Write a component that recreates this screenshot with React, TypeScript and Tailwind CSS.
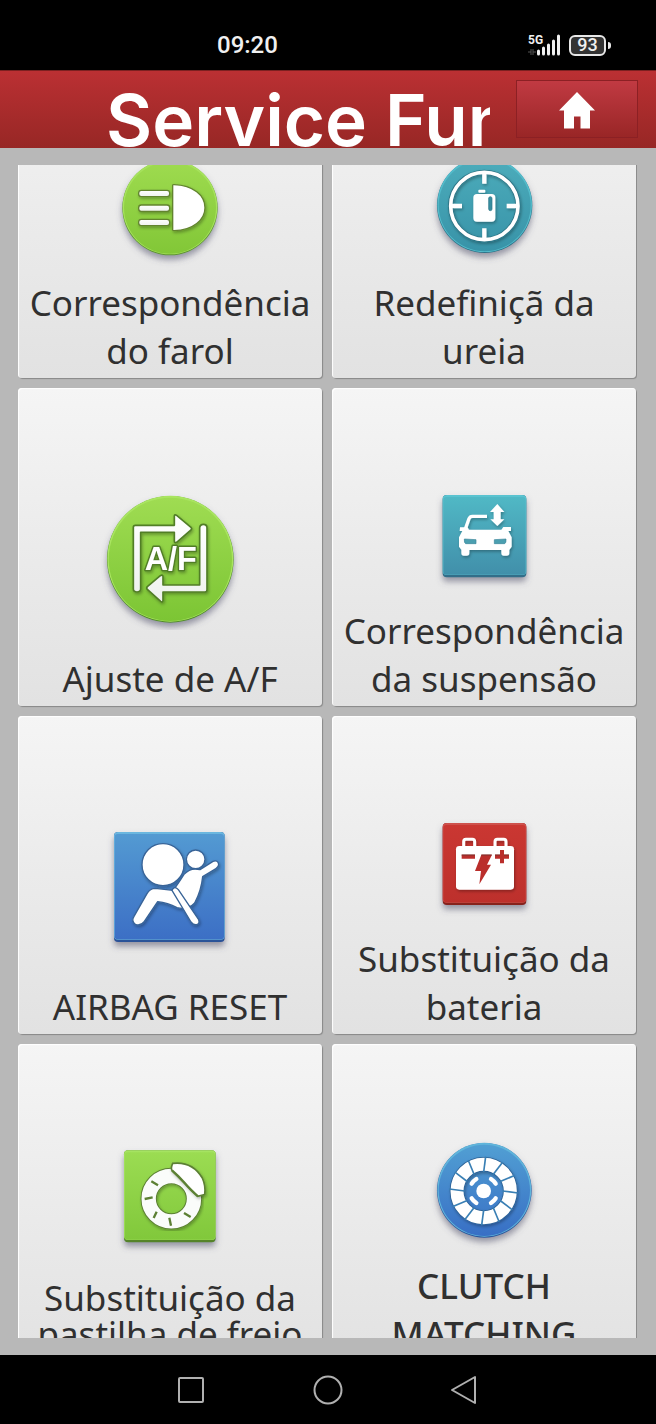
import { useLayoutEffect, useRef, type ReactNode } from "react";

const FIRST_SCROLL = 105;

function Shade({ id, from, to }: { id: string; from: string; to: string }) {
  return (
    <linearGradient id={id} x1="0" y1="0" x2="0" y2="1">
      <stop offset="0" stopColor={from} />
      <stop offset="1" stopColor={to} />
    </linearGradient>
  );
}

function Art({ box, id, from, to, children }: { box: string; id: string; from: string; to: string; children: ReactNode }) {
  return (
    <svg viewBox={box} className="size-[140px]" aria-hidden="true">
      <defs>
        <Shade id={id} from={from} to={to} />
        <Shade id={id + "-white"} from="#ffffff" to="#eef2ee" />
        <filter id={id + "-drop"} x="-20%" y="-20%" width="140%" height="150%">
          <feDropShadow dx="0" dy="13" stdDeviation="10" floodColor="#50506a" floodOpacity="0.55" />
        </filter>
        <filter id={id + "-soft"} x="-20%" y="-20%" width="140%" height="140%">
          <feDropShadow dx="3" dy="5" stdDeviation="4" floodColor="#000000" floodOpacity="0.3" />
        </filter>
      </defs>
      {children}
    </svg>
  );
}

function Disc({ id, cx, cy, r, top, rim }: { id: string; cx: number; cy: number; r: number; top: string; rim: string }) {
  return (
    <g>
      <circle cx={cx} cy={cy} r={r} fill={rim} filter={`url(#${id}-drop)`} />
      <circle cx={cx} cy={cy - 2} r={r - 1} fill={top} />
      <circle cx={cx} cy={cy} r={r - 5} fill={`url(#${id})`} />
    </g>
  );
}

function Plate({ id, x, y, w, h, top, rim }: { id: string; x: number; y: number; w: number; h: number; top: string; rim: string }) {
  return (
    <g>
      <rect x={x} y={y} width={w} height={h} rx="12" fill={rim} filter={`url(#${id}-drop)`} />
      <rect x={x} y={y} width={w} height={h - 7} rx="12" fill={top} />
      <rect x={x + 2} y={y + 6} width={w - 4} height={h - 14} rx="9" fill={`url(#${id})`} />
    </g>
  );
}

function HeadlampArt() {
  return (
    <Art box="0 -38 420 420" id="lamp" from="#9edb4f" to="#82c737">
      <Disc id="lamp" cx={210} cy={171} r={143} top="#a6e25c" rim="#5f9430" />
      <g fill="url(#lamp-white)" stroke="#62842f" strokeWidth="4" filter="url(#lamp-soft)">
        <rect x="116" y="119" width="93" height="19" rx="8" />
        <rect x="116" y="163" width="93" height="19" rx="8" />
        <rect x="116" y="206" width="93" height="19" rx="8" />
        <path d="M218 104 Q218 102 222 102 C280 104 315 134 315 171 C315 207 280 238 222 240 Q218 240 218 237 Z" fill="#fff" />
      </g>
    </Art>
  );
}

function UreaArt() {
  return (
    <Art box="-18 -38 420 420" id="urea" from="#4cacbb" to="#3893a8">
      <Disc id="urea" cx={194} cy={164} r={143} top="#53bccb" rim="#2b748a" />
      <g filter="url(#urea-soft)">
        <circle cx="193" cy="166" r="101" fill="none" stroke="#2c7485" strokeWidth="16" />
        <circle cx="193" cy="166" r="101" fill="none" stroke="#fff" strokeWidth="11" />
        <path d="M193 66v33M193 233v33M92 166h34M260 166h34" stroke="#fff" strokeWidth="13" />
        <rect x="175" y="117" width="21" height="9" rx="3" fill="#fff" />
        <rect x="160" y="130" width="66" height="83" rx="11" fill="#fff" />
        <rect x="206" y="138" width="10" height="42" rx="5" fill="#398ea0" stroke="#2c7485" strokeWidth="2" />
      </g>
    </Art>
  );
}

function AirFuelArt() {
  return (
    <Art box="30 28 420 420" id="air" from="#9fdc52" to="#7cc534">
      <Disc id="air" cx={241} cy={236} r={190} top="#a9e560" rim="#528b28" />
      <g fill="url(#air-white)" stroke="#517e27" strokeWidth="5" strokeLinejoin="round" filter="url(#air-soft)">
        <path d="M130 325 V140 Q130 134 136 134 H253 V106 Q254 100 260 104 L303 140 Q307 144 303 148 L260 185 Q253 188 253 181 V155 H152 V325 Q152 334 141 334 Q130 334 130 325 Z" />
        <path d="M351 141 V327 Q351 334 344 334 H219 V359 Q218 367 212 362 L172 326 Q168 322 172 318 L211 285 Q219 281 219 288 V313 H329 V141 Q330 131 340 131 Q351 131 351 141 Z" />
      </g>
      <g filter="url(#air-soft)">
        <text x="242" y="267" textAnchor="middle" fontFamily="'Liberation Sans', sans-serif" fontWeight="700" fontSize="97" fill="#fff" stroke="#517e27" strokeWidth="9" strokeLinejoin="round" paintOrder="stroke">A/F</text>
      </g>
    </Art>
  );
}

function SuspensionArt() {
  return (
    <Art box="-33 -43 420 420" id="susp" from="#50b8c5" to="#418faa">
      <Plate id="susp" x={53} y={44} w={251} h={247} top="#5ac3d0" rim="#306e89" />
      <g filter="url(#susp-soft)" fill="#fff">
        <path d="M186 108 H142 Q135 108 132 115 L121 146" fill="none" stroke="#fff" strokeWidth="10" />
        <path d="M105 141 H128 L132 148 H229 L235 140 H258 V152 H250 L260 171 V199 L253 209 V219 Q253 226 245 226 H236 Q229 226 229 218 V209 H133 V218 Q133 226 125 226 H116 Q109 226 109 218 V208 L102 199 V171 L112 152 H104 Z" />
        <path d="M217 71 L238 95 H227 V117 H238 L217 137 L196 117 H206 V95 H195 Z" />
      </g>
      <path d="M118 176 L153 178 V190 H122 Q117 188 118 176 Z M243 176 L208 178 V190 H239 Q244 188 243 176 Z" fill="#4b9fb0" stroke="#39859a" strokeWidth="2" />
    </Art>
  );
}

function AirbagArt() {
  return (
    <Art box="15 8 420 420" id="bag" from="#539ad2" to="#3c6fc5">
      <Plate id="bag" x={57} y={50} w={332} h={330} top="#6ab6df" rim="#2c5298" />
      <g filter="url(#bag-soft)" fill="#fff" stroke="#386397" strokeWidth="4" strokeLinejoin="round">
        <path d="M315 163 L354 138 Q369 133 371 147 Q371 155 363 160 L323 184 Q319 226 299 263 Q279 285 246 277 Q218 262 188 259 L148 318 Q137 333 121 327 Q108 317 117 303 L156 235 Q165 219 181 219 L234 225 Q249 206 267 177 Q287 155 315 163 Z" />
        <path d="M231 225 Q238 210 250 223 L311 313 Q315 325 305 328 Q296 330 288 320 Z" />
        <circle cx="204" cy="148" r="63" />
        <circle cx="302" cy="132" r="28" />
      </g>
    </Art>
  );
}

function BatteryArt() {
  return (
    <Art box="-33 -35 420 420" id="batt" from="#ca3732" to="#bd302c">
      <Plate id="batt" x={53} y={52} w={251} h={246} top="#ce514c" rim="#87211f" />
      <g filter="url(#batt-soft)">
        <path d="M116 122 V108 Q116 101 123 101 H142 Q149 101 149 108 V122 M210 122 V108 Q210 101 217 101 H236 Q243 101 243 108 V122" fill="none" stroke="#fff" strokeWidth="9" />
        <rect x="93" y="121" width="174" height="131" rx="10" fill="#fff" />
      </g>
      <path d="M110 147h40v12h-40z M210 147h15v-14h12v14h15v12h-15v14h-12v-14h-15z M169 147 H201 L186 177 H198 L163 236 L168 196 H150 Z" fill="#ba2e2b" />
      <path d="M110 148h40M210 148h15M237 148h15M169 148h31" stroke="#78302d" strokeWidth="3" />
    </Art>
  );
}

function BrakeArt() {
  return (
    <Art box="-17 -18 420 420" id="brake" from="#9bdc52" to="#81c83b">
      <Plate id="brake" x={55} y={43} w={275} h={276} top="#a5e361" rim="#548329" />
      <g filter="url(#brake-soft)">
        <circle cx="197" cy="188" r="68" fill="none" stroke="#5c8034" strokeWidth="49" />
        <circle cx="197" cy="188" r="68" fill="none" stroke="#fafcfa" strokeWidth="43" />
      </g>
      <path d="M137 136l20 12M117 189l24-5M144 246l9-19M196 269l-5-24M255 243l-20-12" stroke="#5c8034" strokeWidth="7" />
      <path d="M201 82 Q260 75 290 126 Q301 151 297 176 L276 181 L200 105 Q194 98 201 82 Z" fill="#fff" stroke="#5c8034" strokeWidth="5" filter="url(#brake-soft)" />
      <path d="M199 103 Q218 119 235 139 Q258 166 277 181" fill="none" stroke="#5c8034" strokeWidth="7" />
    </Art>
  );
}

const spokes = Array.from({ length: 12 }, (_, i) => i * 30);

function ClutchArt() {
  return (
    <Art box="0 -12 420 420" id="clutch" from="#519fd3" to="#386fc5">
      <Disc id="clutch" cx={211} cy={196} r={142} top="#60b5db" rim="#2c589e" />
      <circle cx="209" cy="198" r="80" fill="none" stroke="#2c6195" strokeWidth="44" filter="url(#clutch-soft)" />
      <circle cx="209" cy="198" r="80" fill="none" stroke="#fff" strokeWidth="39" />
      <g stroke="#397fb4" strokeWidth="5">
        {spokes.map((angle) => (
          <path key={angle} d="M209 141 L215 95" transform={`rotate(${angle} 209 198)`} />
        ))}
      </g>
      <circle cx="209" cy="198" r="22" fill="#fff" />
      <g stroke="#fff" strokeWidth="13" strokeLinecap="round">
        <path d="M173 176 Q178 168 187 162 M231 162 Q240 168 245 176 M245 220 Q240 228 231 234 M187 234 Q178 228 173 220" fill="none" />
      </g>
    </Art>
  );
}

type Tile = { label: string; art: ReactNode; text: string };

const regular = "pb-[3px] leading-[48px]";
const tiles: Tile[] = [
  { label: "Correspondência do farol", art: <HeadlampArt />, text: regular },
  { label: "Redefiniçã da ureia", art: <UreaArt />, text: regular },
  { label: "Ajuste de A/F", art: <AirFuelArt />, text: regular },
  { label: "Correspondência da suspensão", art: <SuspensionArt />, text: regular },
  { label: "AIRBAG RESET", art: <AirbagArt />, text: regular },
  { label: "Substituição da bateria", art: <BatteryArt />, text: regular },
  { label: "Substituição da pastilha de freio", art: <BrakeArt />, text: "pb-[10px] leading-[36px]" },
  { label: "CLUTCH MATCHING", art: <ClutchArt />, text: "pb-[4px] leading-[48px] font-medium" },
];

function StatusBar() {
  return (
    <div className="flex h-[70px] shrink-0 items-center justify-between bg-black pt-5 pr-[45px] pl-[217px] font-['Roboto',sans-serif] text-[#f0f0f0]">
      <time className="text-[24px] leading-8 font-medium">09:20</time>
      <div className="flex items-center gap-2">
        <svg viewBox="0 0 34 22" className="h-[22px] w-[34px]" role="img" aria-label="5G">
          <text x="1" y="10" fontSize="12" fontWeight="700" fill="#f0f0f0">5G</text>
          <path d="M1 18h3M4 15v6M6 15v6M6 18h3" stroke="#555" strokeWidth="1" />
          <path d="M11.500 17v3M16.500 14v6M21.500 11v9M26.500 7v13M31.500 2v18" stroke="#f0f0f0" strokeWidth="3" strokeLinecap="round" />
        </svg>
        <div className="flex items-center gap-0.5">
          <span className="flex h-[21px] w-[37px] items-center justify-center rounded-md border-2 border-[#e8e8e8] bg-[#333333] text-[18px] leading-none font-medium">93</span>
          <span className="h-[7px] w-[3px] rounded-r-sm bg-[#e8e8e8]" />
        </div>
      </div>
    </div>
  );
}

export default function App() {
  const list = useRef<HTMLElement>(null);

  useLayoutEffect(() => {
    if (list.current) list.current.scrollTop = FIRST_SCROLL;
  }, []);

  return (
    <div className="flex h-screen flex-col bg-[#b8b8b8] font-['Noto_Sans',sans-serif]">
      <StatusBar />
      <header className="flex h-[78px] shrink-0 items-start gap-[26px] border-t border-[#7c2020] bg-linear-to-b from-[#bb3033] to-[#972725] pr-[18px] pl-[106px]">
        <h1 className="h-full min-w-0 flex-1 overflow-hidden font-['Inter',sans-serif] text-[71px] leading-[98px] font-semibold whitespace-nowrap text-white">
          Service Function
        </h1>
        <button type="button" aria-label="Home" className="mt-[9px] flex h-[58px] w-[122px] items-center justify-center border border-[#8c2024] bg-linear-to-b from-[#c13a42] to-[#992626] pt-0.5">
          <svg viewBox="0 0 36 37" className="h-[37px] w-9" aria-hidden="true">
            <path d="M18 0 L36 18.500 H31 V36.500 H21.500 V24.500 H15 V36.500 H5 V18.500 H0 Z" fill="#fff" />
          </svg>
        </button>
      </header>
      <div className="flex min-h-0 flex-1 flex-col pt-[17px] pr-[19px] pb-[17px] pl-[18px]">
        <main ref={list} className="min-h-0 flex-1 overflow-y-auto pr-px [scrollbar-width:none]">
          <div className="grid grid-cols-2 gap-2.5">
            {tiles.map((tile) => (
              <button
                key={tile.label}
                type="button"
                className="flex min-h-[318px] flex-col items-center rounded-[4px] bg-linear-to-b from-[#f5f5f5] via-[#ebebeb] to-[#e2e2e2] pt-[76px] shadow-[1px_1px_1px_#888888,inset_1px_1px_1px_#ffffff]"
              >
                <span className="flex flex-1 items-center">{tile.art}</span>
                <span className={`px-3 text-center text-[35px] text-[#303030] ${tile.text}`}>{tile.label}</span>
              </button>
            ))}
          </div>
        </main>
      </div>
      <nav className="flex h-[69px] shrink-0 items-center justify-center gap-[104px] bg-black text-[#b0b0b0]">
        <button type="button" aria-label="Recent apps">
          <svg viewBox="0 0 32 32" className="size-8" fill="none" stroke="currentColor" strokeWidth="2">
            <rect x="3" y="4" width="24" height="24" rx="1" />
          </svg>
        </button>
        <button type="button" aria-label="Home screen">
          <svg viewBox="0 0 32 32" className="size-8" fill="none" stroke="currentColor" strokeWidth="2">
            <circle cx="16" cy="16" r="13.500" />
          </svg>
        </button>
        <button type="button" aria-label="Back">
          <svg viewBox="0 0 32 32" className="size-8" fill="none" stroke="currentColor" strokeWidth="2" strokeLinejoin="round">
            <path d="M27 3 V29 L4 16 Z" />
          </svg>
        </button>
      </nav>
    </div>
  );
}
